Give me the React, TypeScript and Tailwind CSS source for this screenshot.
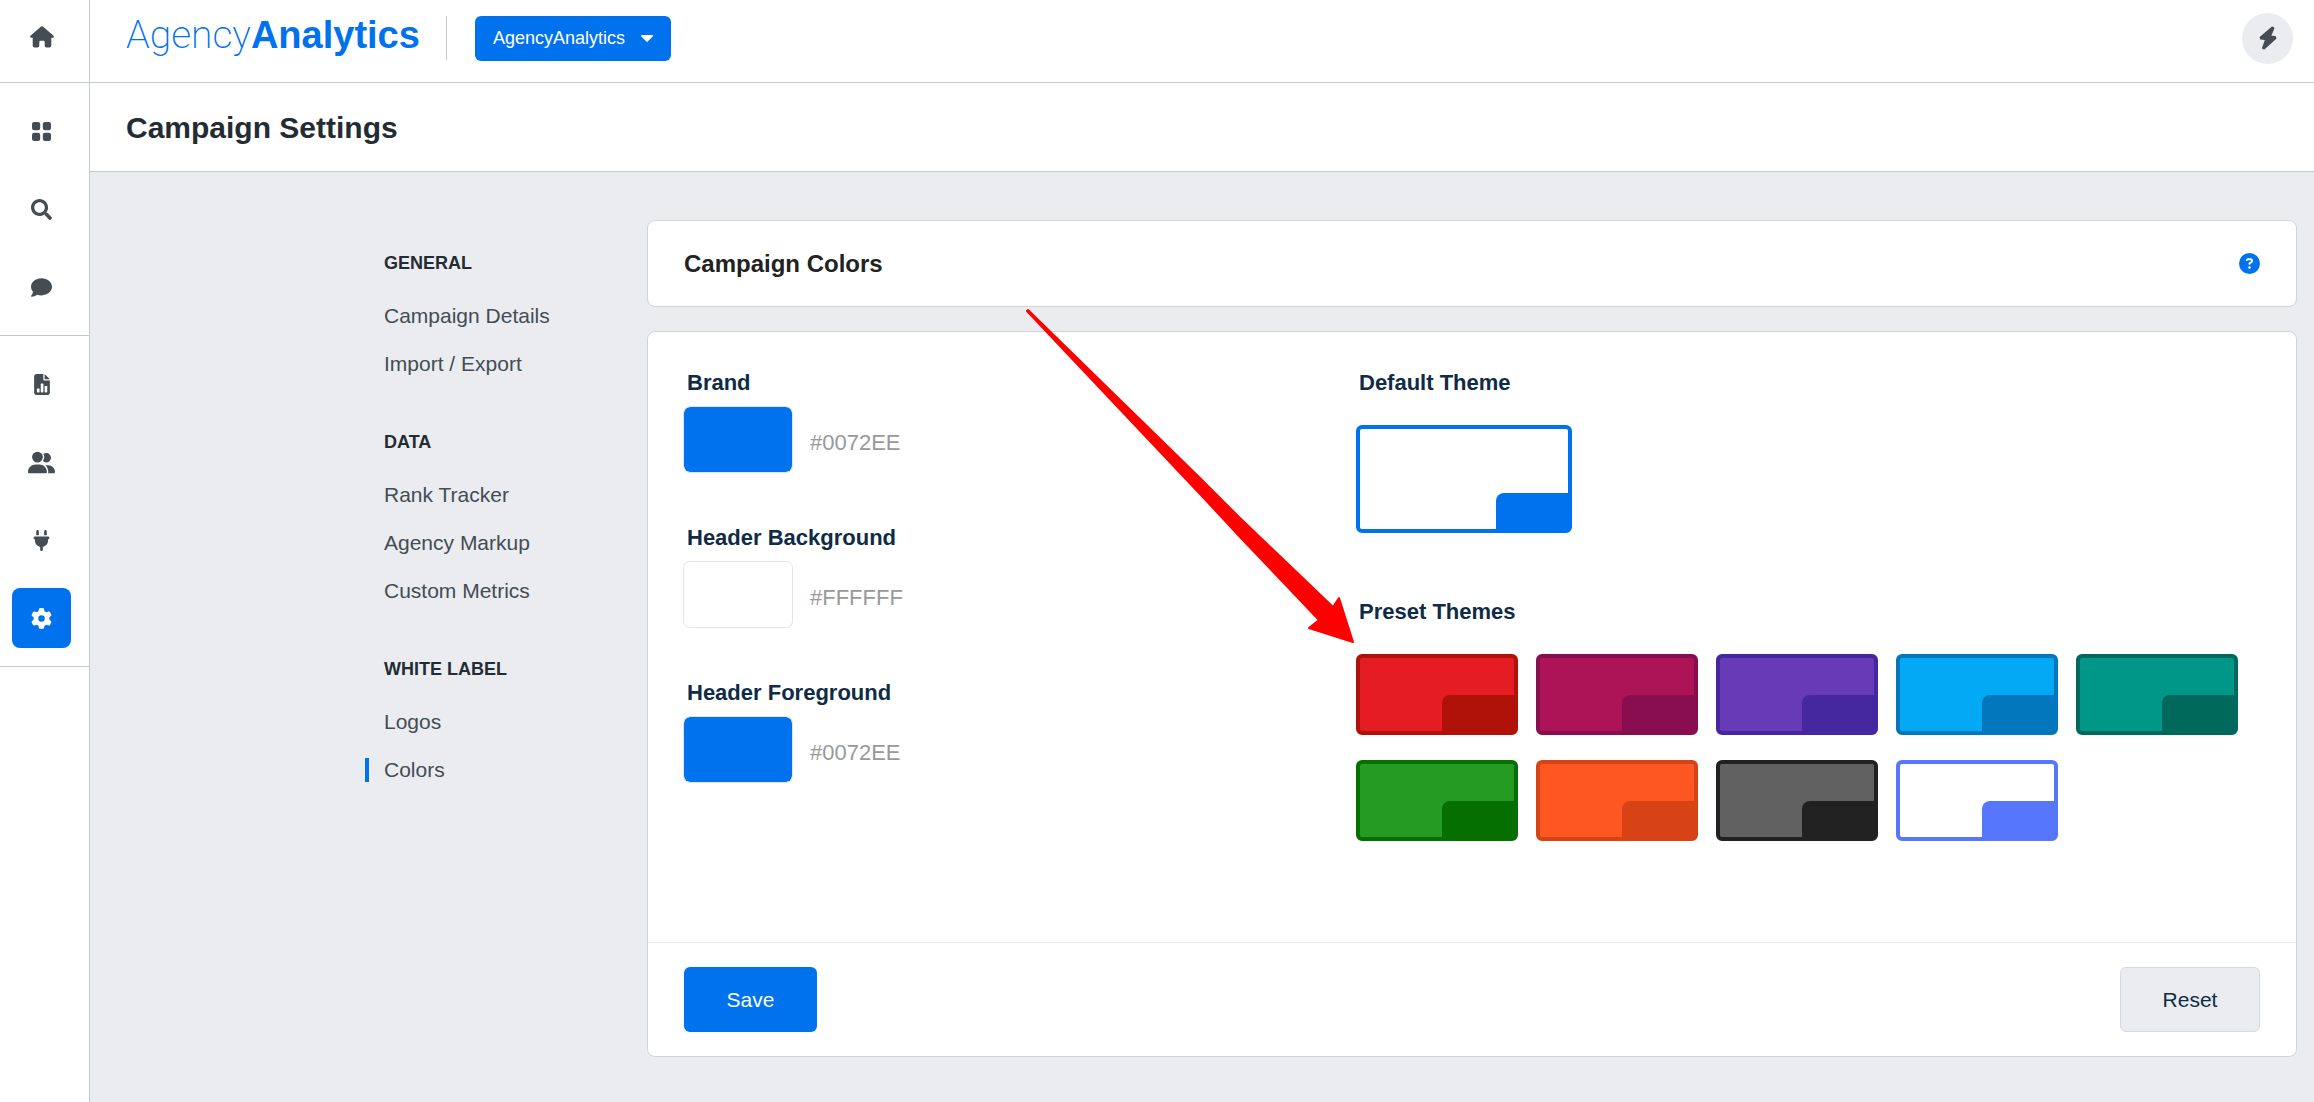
import { useState } from "react";
import { FaSearch } from "react-icons/fa";
import { FaCircleQuestion, FaComment, FaGear, FaPlug, FaUserGroup } from "react-icons/fa6";

interface Theme {
  name: string;
  bg: string;
  accent: string;
}

const navSections = [
  { title: "GENERAL", items: ["Campaign Details", "Import / Export"] },
  { title: "DATA", items: ["Rank Tracker", "Agency Markup", "Custom Metrics"] },
  { title: "WHITE LABEL", items: ["Logos", "Colors"] },
];

const defaultTheme: Theme = { name: "Default", bg: "#ffffff", accent: "#0072ee" };

const presetThemes: Theme[] = [
  { name: "Red", bg: "#e51c23", accent: "#b0120a" },
  { name: "Magenta", bg: "#ad1457", accent: "#880e4f" },
  { name: "Purple", bg: "#673ab7", accent: "#4527a0" },
  { name: "Sky", bg: "#03a9f4", accent: "#0277bd" },
  { name: "Teal", bg: "#009688", accent: "#00695c" },
  { name: "Green", bg: "#259b24", accent: "#056f00" },
  { name: "Orange", bg: "#ff5722", accent: "#d84315" },
  { name: "Charcoal", bg: "#616161", accent: "#212121" },
  { name: "Light", bg: "#ffffff", accent: "#5677fc" },
];

function HomeIcon() {
  return (
    <svg width="24" height="22" viewBox="0 0 24 22" fill="currentColor" aria-hidden="true">
      <path d="M11.1 0.600a1.400 1.400 0 0 1 1.800 0L23.300 9.600c1 .9.500 2.200-.7 2.200H21.300V19.700a1.800 1.800 0 0 1-1.800 1.800H16.500a1.800 1.800 0 0 1-1.800-1.800V16a1.200 1.200 0 0 0-1.200-1.200H10.500A1.200 1.200 0 0 0 9.300 16v3.700a1.800 1.800 0 0 1-1.800 1.800H4.500a1.800 1.800 0 0 1-1.800-1.800V11.800H1.400C.2 11.800-.3 10.500.7 9.600z" />
    </svg>
  );
}

function GridIcon() {
  return (
    <svg width="19" height="19" viewBox="0 0 19 19" fill="currentColor" aria-hidden="true">
      <rect x="0" y="0" width="8.2" height="8.2" rx="2.2" />
      <rect x="10.8" y="0" width="8.2" height="8.2" rx="2.2" />
      <rect x="0" y="10.8" width="8.2" height="8.2" rx="2.2" />
      <rect x="10.8" y="10.8" width="8.2" height="8.2" rx="2.2" />
    </svg>
  );
}

function ReportIcon() {
  return (
    <svg width="16" height="21" viewBox="0 0 384 512" fill="currentColor" aria-hidden="true">
      <path d="M64 0C28.700 0 0 28.700 0 64V448c0 35.300 28.700 64 64 64H320c35.300 0 64-28.700 64-64V160H256c-17.700 0-32-14.300-32-32V0H64zM256 0V128H384L256 0z" />
      <g fill="#fff">
        <rect x="68" y="356" width="64" height="92" rx="16" />
        <rect x="162" y="232" width="64" height="216" rx="16" />
        <rect x="256" y="290" width="64" height="158" rx="16" />
      </g>
    </svg>
  );
}

function BoltIcon() {
  return (
    <svg
      width="18"
      height="24"
      viewBox="0 0 18 24"
      fill="currentColor"
      stroke="currentColor"
      strokeWidth="2"
      strokeLinejoin="round"
      aria-hidden="true"
    >
      <path d="M13.300 1.600L1.600 11.400L2 12.600L7.200 13.200L4 22L5 22.400L16.400 12.200L16 11L10.900 10.500L14.400 2.200Z" />
    </svg>
  );
}

function SideLink({ label, active, children }: { label: string; active?: boolean; children: React.ReactNode }) {
  return (
    <a
      href="#"
      aria-label={label}
      className={
        active
          ? "flex h-[60px] w-[59px] items-center justify-center rounded-lg bg-[#0072ee] text-white"
          : "flex h-[60px] w-[59px] items-center justify-center text-[#444c54]"
      }
    >
      {children}
    </a>
  );
}

function Sidebar() {
  return (
    <nav className="w-[90px] shrink-0 border-r border-[#c5cad0] bg-white">
      <div className="flex h-[83px] items-center justify-center border-b border-[#c5cad0] pr-[6px] pb-2">
        <SideLink label="Home"><HomeIcon /></SideLink>
      </div>
      <div className="flex flex-col items-center gap-[18px] border-b border-[#c5cad0] py-[18px] pr-[6px]">
        <SideLink label="Dashboard"><GridIcon /></SideLink>
        <SideLink label="Search"><FaSearch size={21} /></SideLink>
        <SideLink label="Messages"><FaComment size={21} /></SideLink>
      </div>
      <div className="flex flex-col items-center gap-[18px] border-b border-[#c5cad0] py-[18px] pr-[6px]">
        <SideLink label="Reports"><ReportIcon /></SideLink>
        <SideLink label="Users"><FaUserGroup size={27} /></SideLink>
        <SideLink label="Integrations"><FaPlug size={21} /></SideLink>
        <SideLink label="Settings" active><FaGear size={21} /></SideLink>
      </div>
    </nav>
  );
}

function Header() {
  return (
    <header className="flex h-[83px] items-center border-b border-[#c5cad0] bg-white pr-[21px] pb-[6px] pl-9">
      <a href="#" className="flex items-baseline pb-[6px] leading-[44px] text-[#0072ee]">
        <span className="font-[Roboto] text-[39px] font-extralight">Agency</span>
        <span className="text-[38px] font-bold">Analytics</span>
      </a>
      <div className="ml-[26px] h-11 w-px bg-[#c5cad0]" />
      <button className="ml-7 flex h-[45px] items-center gap-4 rounded-md bg-[#0072ee] px-[18px] text-lg text-white">
        AgencyAnalytics
        <svg width="12" height="7" viewBox="0 0 12 7" fill="currentColor" aria-hidden="true">
          <path d="M1 0h10c.9 0 1.300 1 .7 1.600l-5 5a1 1 0 0 1-1.400 0l-5-5C-.3 1 .1 0 1 0z" />
        </svg>
      </button>
      <button aria-label="Quick actions" className="ml-auto flex h-[51px] w-[51px] items-center justify-center rounded-full bg-[#eaecf0] pb-px text-[#444c54]">
        <BoltIcon />
      </button>
    </header>
  );
}

function SettingsNav() {
  return (
    <aside className="flex w-[557px] shrink-0 flex-col gap-[54px] pt-[79px] pl-[275px]">
      {navSections.map((section) => (
        <div key={section.title}>
          <h2 className="mb-[29px] pl-[19px] text-lg leading-6 font-bold text-[#232b33]">{section.title}</h2>
          <ul className="flex flex-col gap-6">
            {section.items.map((item) => (
              <li key={item}>
                <a
                  href="#"
                  className={
                    item === "Colors"
                      ? "block border-l-4 border-[#0072ee] pl-[15px] text-[21px] leading-6 text-[#444c54]"
                      : "block border-l-4 border-transparent pl-[15px] text-[21px] leading-6 text-[#444c54]"
                  }
                >
                  {item}
                </a>
              </li>
            ))}
          </ul>
        </div>
      ))}
    </aside>
  );
}

interface ColorFieldProps {
  id: string;
  label: string;
  value: string;
  onChange: (value: string) => void;
}

function ColorField({ id, label, value, onChange }: ColorFieldProps) {
  return (
    <div>
      <label htmlFor={id} className="block pl-[3px] text-[22px] leading-[30px] font-bold text-[#0f2b46]">
        {label}
      </label>
      <div className="mt-[9px] flex items-center gap-[18px]">
        <input
          id={id}
          type="color"
          value={value}
          onChange={(e) => onChange(e.target.value)}
          className="h-[65px] w-[108px] appearance-none rounded-md bg-transparent p-0 ring-1 ring-[#e4e5e6] [&::-webkit-color-swatch]:rounded-md [&::-webkit-color-swatch]:border-0 [&::-webkit-color-swatch-wrapper]:p-0"
        />
        <span className="pt-[6px] text-[22px] leading-[30px] text-[#999999]">{value.toUpperCase()}</span>
      </div>
    </div>
  );
}

function ThemeButton({ theme, large, onSelect }: { theme: Theme; large?: boolean; onSelect: (theme: Theme) => void }) {
  return (
    <button
      aria-label={`${theme.name} theme`}
      onClick={() => onSelect(theme)}
      className={
        large
          ? "flex h-[108px] w-[216px] items-end justify-end rounded-md border-4"
          : "flex h-[81px] w-[162px] items-end justify-end rounded-md border-4"
      }
      style={{ backgroundColor: theme.bg, borderColor: theme.accent }}
    >
      <span className="h-9 w-[72px] rounded-tl-lg" style={{ backgroundColor: theme.accent }} />
    </button>
  );
}

function Arrow() {
  return (
    <svg
      className="pointer-events-none absolute -top-[61px] right-full mr-[1px]"
      width="330"
      height="337"
      viewBox="1025 307 330 337"
      fill="#ff0000"
      stroke="#ff0000"
      strokeWidth="2"
      strokeLinejoin="round"
      aria-hidden="true"
    >
      <path d="M1028 310L1200 478L1240 518L1333 607L1339 598L1353 642L1309 628L1319 620L1240 537L1200 494L1027 311Z" />
    </svg>
  );
}

export default function App() {
  const [brand, setBrand] = useState("#0072ee");
  const [headerBg, setHeaderBg] = useState("#ffffff");
  const [headerFg, setHeaderFg] = useState("#0072ee");

  function applyTheme(theme: Theme) {
    setBrand(theme.accent);
    setHeaderBg(theme.bg);
    setHeaderFg(theme.accent);
  }

  return (
    <div className="flex min-h-screen bg-[#eaecf0] font-['Liberation_Sans',Arial,sans-serif]">
      <Sidebar />
      <div className="min-w-0 flex-1">
        <Header />
        <div className="flex h-[89px] items-center border-b border-[#c5cad0] bg-white pt-[2px] pl-9">
          <h1 className="text-3xl leading-9 font-bold text-[#232b33]">Campaign Settings</h1>
        </div>

        <div className="flex pr-[17px]">
          <SettingsNav />
          <main className="flex min-w-0 flex-1 flex-col gap-6 pt-12 pb-11">
            <section className="flex h-[87px] items-center justify-between rounded-lg border border-[#cfd4d9] bg-white px-9">
              <h2 className="text-2xl font-bold text-[#222222]">Campaign Colors</h2>
              <button aria-label="Help" className="text-[#0072ee]">
                <FaCircleQuestion size={21} />
              </button>
            </section>

            <section className="rounded-lg border border-[#cfd4d9] bg-white">
              <div className="flex justify-between pt-9 pb-[101px] pl-9">
                <div className="flex flex-col gap-[51px]">
                  <ColorField id="brand" label="Brand" value={brand} onChange={setBrand} />
                  <ColorField id="header-bg" label="Header Background" value={headerBg} onChange={setHeaderBg} />
                  <ColorField id="header-fg" label="Header Foreground" value={headerFg} onChange={setHeaderFg} />
                </div>

                <div className="relative w-[940px]">
                  <Arrow />
                  <h3 className="mb-[27px] pl-[3px] text-[22px] leading-[30px] font-bold text-[#0f2b46]">Default Theme</h3>
                  <ThemeButton theme={defaultTheme} large onSelect={applyTheme} />
                  <h3 className="mt-16 mb-[27px] pl-[3px] text-[22px] leading-[30px] font-bold text-[#0f2b46]">Preset Themes</h3>
                  <div className="flex flex-wrap gap-x-[18px] gap-y-[25px]">
                    {presetThemes.map((theme) => (
                      <ThemeButton key={theme.name} theme={theme} onSelect={applyTheme} />
                    ))}
                  </div>
                </div>
              </div>

              <div className="flex items-center justify-between border-t border-[#eaebec] px-9 py-6">
                <button className="h-[65px] w-[133px] rounded-md bg-[#0072ee] text-[21px] text-white">Save</button>
                <button
                  onClick={() => applyTheme(defaultTheme)}
                  className="h-[65px] w-[140px] rounded-md border border-[#d5dadf] bg-[#eaecf0] text-[21px] text-[#0f2b46]"
                >
                  Reset
                </button>
              </div>
            </section>
          </main>
        </div>
      </div>
    </div>
  );
}
